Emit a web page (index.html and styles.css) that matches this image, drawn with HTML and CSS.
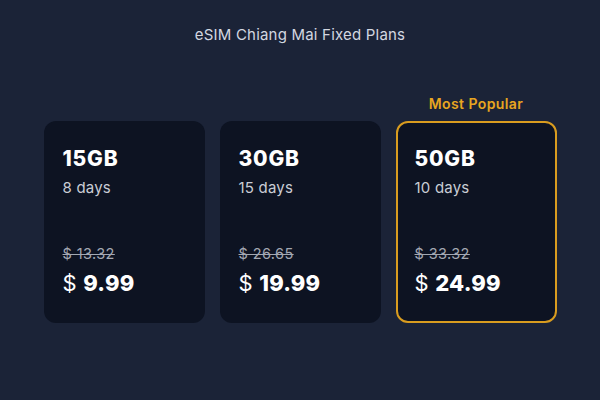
FILE: index.html
```html
<!DOCTYPE html>
<html>
<head>
<meta charset="utf-8">
<link rel="stylesheet" href="styles.css">
</head>
<body>
<main class="page">
  <h1 class="title">eSIM Chiang Mai Fixed Plans</h1>
  <div class="plans">
    <div class="plan-col">
      <div class="badge"></div>
      <div class="card">
        <div class="gb">15GB</div>
        <div class="days">8 days</div>
        <div class="prices">
          <div class="old">$ 13.32</div>
          <div class="new"><span class="cur">$</span> <b>9.99</b></div>
        </div>
      </div>
    </div>
    <div class="plan-col">
      <div class="badge"></div>
      <div class="card">
        <div class="gb">30GB</div>
        <div class="days">15 days</div>
        <div class="prices">
          <div class="old">$ 26.65</div>
          <div class="new"><span class="cur">$</span> <b>19.99</b></div>
        </div>
      </div>
    </div>
    <div class="plan-col">
      <div class="badge">Most Popular</div>
      <div class="card popular">
        <div class="gb">50GB</div>
        <div class="days">10 days</div>
        <div class="prices">
          <div class="old">$ 33.32</div>
          <div class="new"><span class="cur">$</span> <b>24.99</b></div>
        </div>
      </div>
    </div>
  </div>
</main>
</body>
</html>
```
FILE: styles.css
```css
html, body {
  margin: 0;
  padding: 0;
  background: #1b2337;
  width: 600px;
  height: 400px;
  overflow: hidden;
}
body {
  font-family: Inter, "Noto Sans", sans-serif;
  color: #ffffff;
}
.page {
  padding-top: 26px;
}
.title {
  margin: 0;
  text-align: center;
  font-size: 15px;
  font-weight: 400;
  line-height: 18px;
  letter-spacing: 0.2px;
  color: #d3d7e0;
}
.plans {
  display: grid;
  grid-template-columns: repeat(3, 161px);
  column-gap: 15px;
  justify-content: center;
  margin-top: 52px;
}
.plan-col {
  display: flex;
  flex-direction: column;
}
.badge {
  height: 16px;
  line-height: 16px;
  font-size: 14px;
  font-weight: 600;
  letter-spacing: 0.4px;
  color: #e8a620;
  text-align: center;
  margin-bottom: 9px;
}
.card {
  box-sizing: border-box;
  height: 202px;
  background: #0d1322;
  border: 2px solid transparent;
  border-radius: 12px;
  padding: 24px 17px 24px;
  display: flex;
  flex-direction: column;
}
.card.popular {
  border-color: #d99c1f;
}
.gb {
  font-size: 21px;
  font-weight: 800;
  line-height: 24px;
  letter-spacing: 0.8px;
  color: #ffffff;
}
.days {
  margin-top: 8px;
  font-size: 15px;
  line-height: 18px;
  letter-spacing: 0.2px;
  color: #c9cdd5;
}
.prices {
  margin-top: auto;
}
.old {
  font-size: 14.5px;
  line-height: 17px;
  letter-spacing: 0.4px;
  color: #a3a8b2;
  text-decoration: line-through;
}
.new {
  margin-top: 8px;
  font-size: 22px;
  line-height: 27px;
  letter-spacing: 0.2px;
  color: #ffffff;
}
.new .cur {
  font-weight: 400;
}
.new b {
  font-weight: 800;
}
```
